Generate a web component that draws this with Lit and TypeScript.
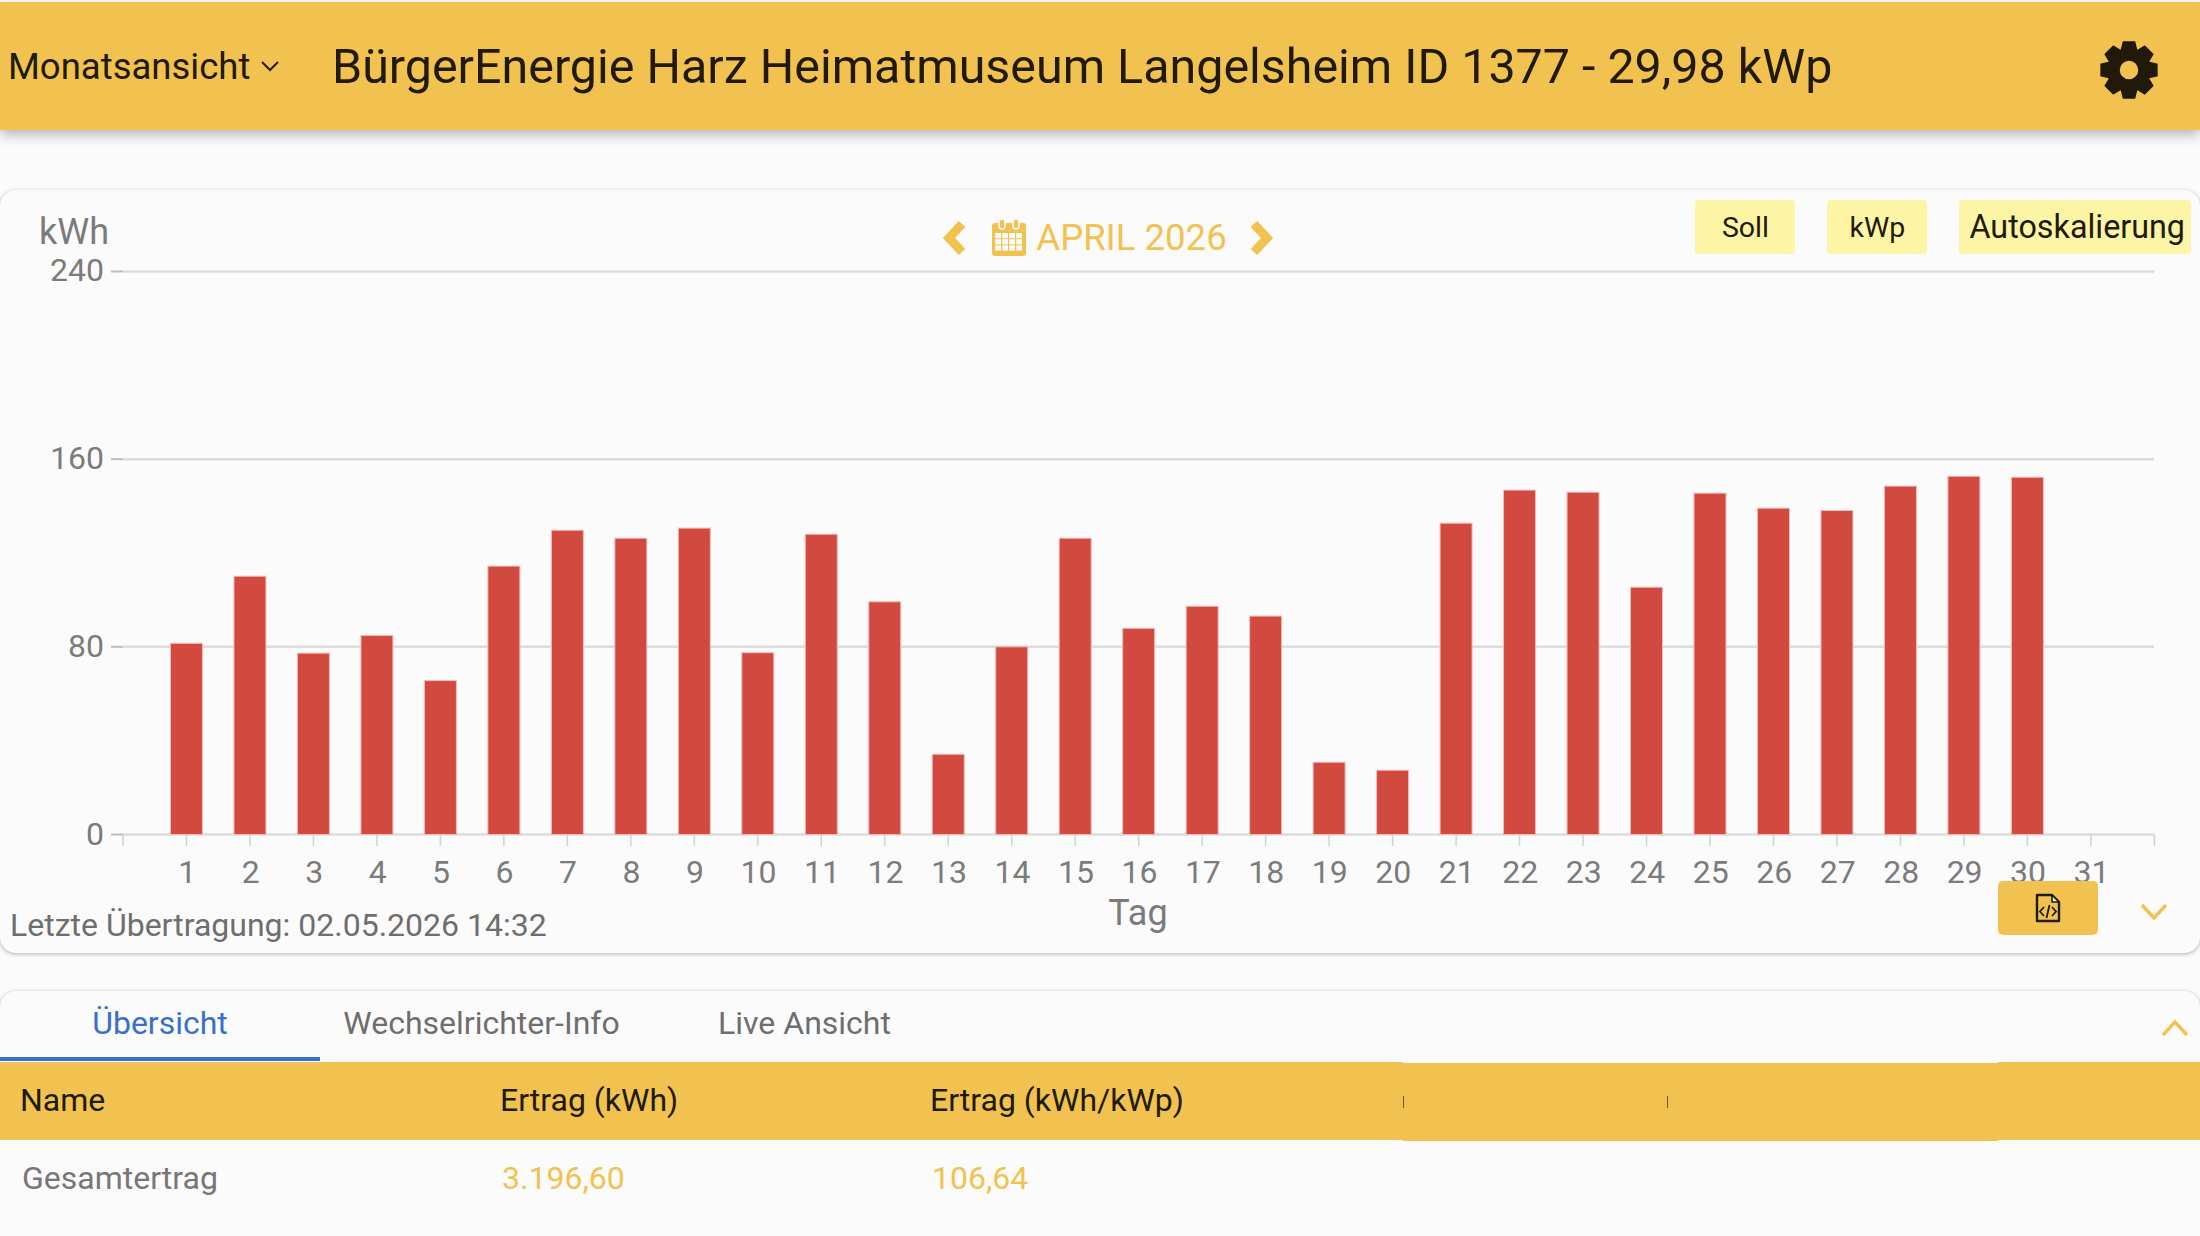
import { LitElement, html, svg, css, type TemplateResult } from 'lit';
import { customElement } from 'lit/decorators.js';

// Daily yield in kWh, April 2026. Day 31 has no value.
const DAILY_KWH = [
  81.5, 110.1, 77.3, 84.8, 65.6, 114.4, 129.7, 126.3, 130.6, 77.5, 128.0, 99.2,
  34.2, 80.0, 126.3, 87.9, 97.3, 93.1, 30.8, 27.4, 132.7, 146.8, 145.9, 105.4,
  145.5, 139.1, 138.1, 148.5, 152.7, 152.3,
];

// Chart geometry, in page coordinates (the svg viewBox starts at the card top)
const CARD_TOP = 190;
const CARD_HEIGHT = 763;
const PLOT_LEFT = 123;
const PLOT_RIGHT = 2154;
const BASELINE = 834.5;
const PX_PER_KWH = 2.346;
const STEP = 63.48;
const BAR_WIDTH = 32;

function gearPath(cx: number, cy: number): string {
  const teeth = 8;
  const outer = 28.5;
  const root = 21.5;
  const hole = 10;
  const pts: string[] = [];
  for (let i = 0; i < teeth; i++) {
    const a = (i * 2 * Math.PI) / teeth - Math.PI / 2;
    const p = (r: number, da: number) =>
      `${(cx + r * Math.cos(a + da)).toFixed(2)} ${(cy + r * Math.sin(a + da)).toFixed(2)}`;
    pts.push(p(root, -0.36), p(outer, -0.2), p(outer, 0.2), p(root, 0.36));
  }
  const ring = `M${cx - hole} ${cy}a${hole} ${hole} 0 1 0 ${hole * 2} 0a${hole} ${hole} 0 1 0 ${-hole * 2} 0Z`;
  return `M${pts.join('L')}Z${ring}`;
}

@customElement('app-root')
export class AppRoot extends LitElement {
  static styles = css`
    :host {
      display: block;
      height: 1236px;
      overflow: hidden;
      box-sizing: border-box;
      padding-top: 2px;
      background: #fbfbfb;
      font-family: Roboto, 'Liberation Sans', sans-serif;
      color: #211a0a;
    }

    .header {
      position: relative;
      z-index: 2;
      display: flex;
      align-items: center;
      height: 128px;
      background: #f1c24f;
      box-shadow: 0 5px 12px rgba(0, 0, 0, 0.28);
    }

    .view {
      display: flex;
      align-items: center;
      gap: 10px;
      width: 332px;
      padding-left: 8px;
      box-sizing: border-box;
      font-size: 36.5px;
    }

    .title {
      flex: 1;
      font-size: 48.4px;
      white-space: nowrap;
    }

    .gear {
      width: 62px;
      height: 62px;
      margin: 8px 40px 0 0;
      fill: #211a0a;
    }

    .card {
      background: #fbfbfb;
      border-radius: 16px;
      box-shadow: 0 1px 4px rgba(0, 0, 0, 0.3);
    }

    .chart-card {
      display: grid;
      height: 763px;
      margin-top: 60px;
    }

    .chart-card > * {
      grid-area: 1 / 1;
    }

    .chart {
      display: block;
      width: 2200px;
      height: 763px;
      font-family: Roboto, 'Liberation Sans', sans-serif;
    }

    .axis-label {
      font-size: 32px;
      fill: #7b7b7b;
    }

    .axis-title {
      font-size: 36px;
      fill: #7b7b7b;
    }

    .chart-top {
      display: grid;
      grid-template-columns: 1fr auto 1fr;
      align-items: start;
      align-self: start;
      padding: 10px 9px 0 0;
    }

    .month {
      grid-column: 2;
      display: flex;
      align-items: center;
      margin: 16px 0 0 25px;
      color: #f1c24f;
      font-size: 36.6px;
    }

    .month .prev {
      width: 24px;
      height: 38px;
      margin-right: 26px;
    }

    .month .next {
      width: 24px;
      height: 38px;
      margin-left: 23px;
    }

    .month .calendar {
      width: 34px;
      height: 37px;
      margin-right: 10px;
    }

    .toggles {
      grid-column: 3;
      display: flex;
      justify-content: flex-end;
      gap: 32px;
    }

    .toggle {
      display: flex;
      align-items: center;
      justify-content: center;
      min-width: 100px;
      height: 54px;
      box-sizing: border-box;
      padding: 0 8px;
      border-radius: 4px;
      background: #fdf4a6;
      font-size: 28.5px;
    }

    .toggle.wide {
      padding: 0 6px 0 10px;
      font-size: 32.3px;
    }

    .chart-foot {
      display: flex;
      align-items: flex-end;
      align-self: end;
      padding: 0 33px 10px 10px;
    }

    .updated {
      flex: 1;
      font-size: 32px;
      line-height: 36px;
      color: #6e6e6e;
    }

    .export {
      display: flex;
      align-items: center;
      justify-content: center;
      width: 100px;
      height: 54px;
      margin: 0 43px 8px 0;
      border-radius: 5px;
      background: #f1c24f;
    }

    .export svg {
      width: 26px;
      height: 30px;
    }

    .toggle-down {
      width: 26px;
      height: 18px;
      margin-bottom: 22px;
    }

    .detail-card {
      height: 300px;
      margin-top: 38px;
    }

    .tabs {
      display: flex;
      align-items: center;
      height: 70px;
      font-size: 32px;
      color: #6e6e6e;
    }

    .tab {
      display: flex;
      align-items: center;
      justify-content: center;
      box-sizing: border-box;
      width: 323px;
      height: 70px;
      padding-bottom: 7px;
    }

    .tab.active {
      width: 320px;
      color: #3a6fc9;
      border-bottom: 4px solid #3a6fc9;
      padding-bottom: 3px;
    }

    .toggle-up {
      width: 26px;
      height: 18px;
      margin: 4px 12px 0 auto;
    }

    .row {
      display: grid;
      grid-template-columns: 488px 430px 485px 264px 331px 1fr;
      align-items: center;
      height: 78px;
      font-size: 32px;
    }

    .row.head > * {
      display: flex;
      align-items: center;
      box-sizing: border-box;
      height: 78px;
      padding-bottom: 2px;
      background: #f1c24f;
    }

    .row.head > .shifted {
      margin-top: 2px;
      padding-bottom: 0;
    }

    .row.head .first {
      padding-left: 20px;
    }

    .row.head .col {
      padding-left: 12px;
    }

    .sliver {
      display: block;
      width: 1px;
      height: 12px;
      background: #6b5420;
    }

    .row.body {
      color: #777;
    }

    .row.body .first {
      padding-left: 22px;
    }

    .row.body .col {
      padding-left: 14px;
      color: #f1c24f;
    }
  `;

  private _chart(): TemplateResult {
    const xAt = (i: number) => PLOT_LEFT + STEP * i;
    const levels = [240, 160, 80, 0];
    const days = Array.from({ length: 31 }, (_, i) => i + 1);
    return html`
      <svg
        class="chart"
        viewBox="0 ${CARD_TOP} 2200 ${CARD_HEIGHT}"
        xmlns="http://www.w3.org/2000/svg"
      >
        ${levels.map((v) => {
          const y = BASELINE - v * PX_PER_KWH;
          return svg`
            <line x1="111" x2=${PLOT_LEFT} y1=${y} y2=${y} stroke="#bdbdbd" stroke-width="2" />
            <line x1=${PLOT_LEFT} x2=${PLOT_RIGHT} y1=${y} y2=${y} stroke="#dcdcdc" stroke-width="2.5" />
            <text class="axis-label" x="104" y=${y + 10} text-anchor="end">${v}</text>
          `;
        })}
        ${Array.from({ length: 33 }, (_, i) => svg`
          <line x1=${xAt(i)} x2=${xAt(i)} y1=${BASELINE} y2="846" stroke="#d2d2d2" stroke-width="1.5" />
        `)}
        ${DAILY_KWH.map((v, i) => {
          const h = v * PX_PER_KWH;
          return svg`
            <rect
              x=${xAt(i + 1) - BAR_WIDTH / 2}
              y=${BASELINE - h}
              width=${BAR_WIDTH}
              height=${h}
              fill="#d2493f"
              stroke="#f0bdb8"
              stroke-width="1"
            />
          `;
        })}
        ${days.map((d) => svg`
          <text class="axis-label" x=${xAt(d) + 0.7} y="883" text-anchor="middle">${d}</text>
        `)}
        <text class="axis-title" x="39" y="244">kWh</text>
        <text class="axis-title" x="1138" y="925" text-anchor="middle">Tag</text>
      </svg>
    `;
  }

  private _calendar(): TemplateResult {
    // Solid shape with the day cells knocked out in the card colour
    const cols = [3.2, 10.2, 17.2, 24.2];
    const rows = [14, 20.2, 26.4];
    return html`
      <svg class="calendar" viewBox="0 0 34 37">
        <rect x="0" y="4" width="34" height="33" rx="3" fill="#f1c24f" />
        <rect x="7" y="0" width="6" height="10" rx="3" fill="#f1c24f" stroke="#fbfbfb" stroke-width="1.5" />
        <rect x="21" y="0" width="6" height="10" rx="3" fill="#f1c24f" stroke="#fbfbfb" stroke-width="1.5" />
        ${cols.map((x) =>
          rows.map(
            (y) => svg`<rect x=${x} y=${y} width="5.8" height="5.2" fill="#fbfbfb" />`
          )
        )}
      </svg>
    `;
  }

  render(): TemplateResult {
    return html`
      <header class="header">
        <div class="view">
          Monatsansicht
          <svg width="20" height="12" viewBox="0 0 20 12">
            <path d="M2 2l8 8 8-8" fill="none" stroke="#211a0a" stroke-width="2" />
          </svg>
        </div>
        <div class="title">BürgerEnergie Harz Heimatmuseum Langelsheim ID 1377 - 29,98 kWp</div>
        <svg class="gear" viewBox="0 0 62 62">
          <path d=${gearPath(31, 31)} fill-rule="evenodd" stroke="#211a0a" stroke-width="1.5" stroke-linejoin="round" />
        </svg>
      </header>

      <section class="card chart-card">
        ${this._chart()}
        <div class="chart-top">
          <div class="month">
            <svg class="prev" viewBox="0 0 24 38">
              <path d="M20 5L7 19l13 14" fill="none" stroke="#f1c24f" stroke-width="9" />
            </svg>
            ${this._calendar()} APRIL 2026
            <svg class="next" viewBox="0 0 24 38">
              <path d="M4 5l13 14L4 33" fill="none" stroke="#f1c24f" stroke-width="9" />
            </svg>
          </div>
          <div class="toggles">
            <div class="toggle">Soll</div>
            <div class="toggle">kWp</div>
            <div class="toggle wide">Autoskalierung</div>
          </div>
        </div>
        <div class="chart-foot">
          <div class="updated">Letzte Übertragung: 02.05.2026 14:32</div>
          <div class="export">
            <svg viewBox="0 0 26 30">
              <path d="M2 2h15l7 7v19H2z" fill="none" stroke="#211a0a" stroke-width="2.4" stroke-linejoin="round" />
              <path d="M17 2v7h7z" fill="#fbf3d8" stroke="#211a0a" stroke-width="1.6" stroke-linejoin="round" />
              <path d="M9 14l-4 4.5 4 4.5M17 14l4 4.5-4 4.5M14.5 12l-3 13" fill="none" stroke="#211a0a" stroke-width="1.8" />
            </svg>
          </div>
          <svg class="toggle-down" viewBox="0 0 26 18">
            <path d="M1 2l12 13L25 2" fill="none" stroke="#f1c24f" stroke-width="3.4" />
          </svg>
        </div>
      </section>

      <section class="card detail-card">
        <div class="tabs">
          <div class="tab active">Übersicht</div>
          <div class="tab">Wechselrichter-Info</div>
          <div class="tab">Live Ansicht</div>
          <svg class="toggle-up" viewBox="0 0 26 18">
            <path d="M1 16L13 3l12 13" fill="none" stroke="#f1c24f" stroke-width="3.4" />
          </svg>
        </div>
        <div class="row head">
          <div class="first">Name</div>
          <div class="col">Ertrag (kWh)</div>
          <div class="col">Ertrag (kWh/kWp)</div>
          <div class="shifted"><span class="sliver"></span></div>
          <div class="shifted"><span class="sliver"></span></div>
          <div></div>
        </div>
        <div class="row body">
          <div class="first">Gesamtertrag</div>
          <div class="col">3.196,60</div>
          <div class="col">106,64</div>
        </div>
      </section>
    `;
  }
}

declare global {
  interface HTMLElementTagNameMap {
    'app-root': AppRoot;
  }
}
